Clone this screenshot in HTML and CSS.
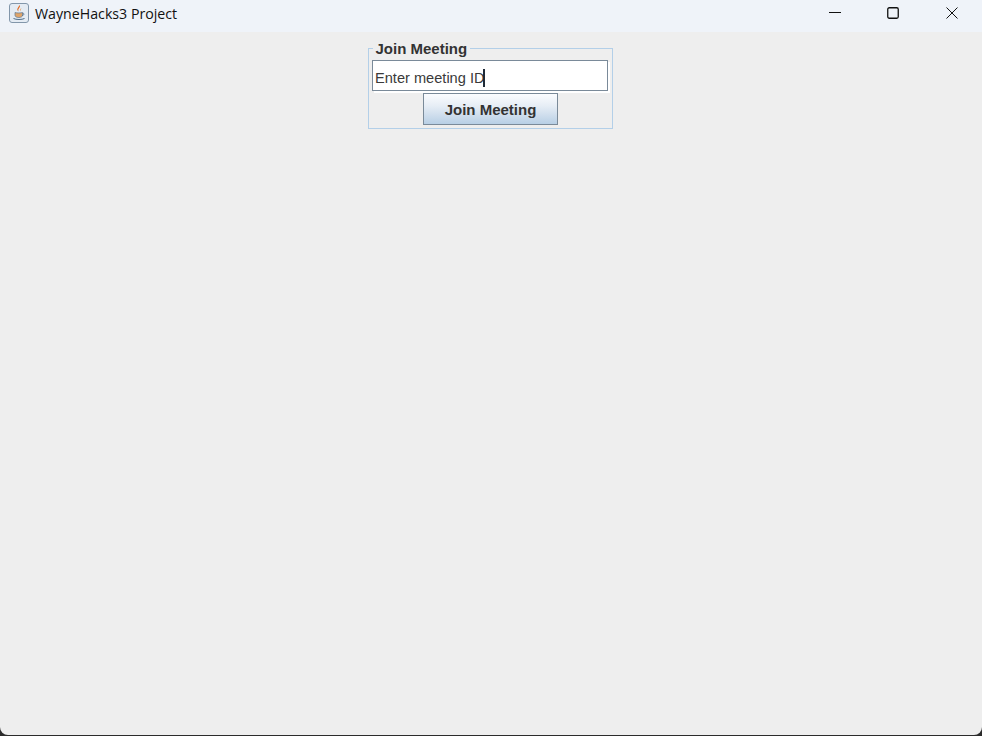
FILE: index.html
```html
<!DOCTYPE html>
<html>
<head>
    <title>WayneHacks3 Project</title>
    <link rel="stylesheet" href="styles.css">
</head>
<body>
    <div class="window">
        <div class="titlebar">
            <div class="app-icon">
                <svg width="20" height="20" viewBox="0 0 20 20">
                    <rect x="0.5" y="0.5" width="19" height="19" rx="2.5" fill="#e4ebf3" stroke="#8296aa"/>
                    <path d="M10.500 2c1.800 2.500-2.500 3.500-.8 6.500-3-2-.3-3.800.8-6.500z" fill="#e0641a"/>
                    <path d="M12.800 5c-1.800 1-2.200 2-1.300 3.500-.3-1.300.2-2.300 1.300-3.500z" fill="#e8862c"/>
                    <path d="M6 9.500c1.500.6 6 .6 7.500 0v2.800c0 1.300-1.300 2.200-3.700 2.200S6 13.600 6 12.300z" fill="#e0a468" stroke="#5c7690" stroke-width=".7"/>
                    <path d="M13.500 10.300c2-.4 2.200 1.800-.6 2.400" fill="none" stroke="#5c7690" stroke-width=".9"/>
                    <path d="M4.500 15.500c2.500 1.300 8.500 1.300 11 0" fill="none" stroke="#4c6a86"/>
                </svg>
            </div>
            <div class="app-title">WayneHacks3 Project</div>
            <div class="controls">
                <div class="control">
                    <svg width="12" height="12" viewBox="0 0 12 12"><path d="M0 5.500h12" stroke="#111" fill="none"/></svg>
                </div>
                <div class="control">
                    <svg width="12" height="12" viewBox="0 0 12 12"><rect x="0.750" y="0.750" width="10.500" height="10.500" rx="1.500" stroke="#111" stroke-width="1.300" fill="none"/></svg>
                </div>
                <div class="control">
                    <svg width="12" height="12" viewBox="0 0 12 12"><path d="M0.500 0.500l11 11M11.500 0.500l-11 11" stroke="#111" fill="none"/></svg>
                </div>
            </div>
        </div>
        <div class="content">
            <fieldset class="join-panel">
                <legend class="join-legend">Join Meeting</legend>
                <div class="meeting-input"><span>Enter meeting ID</span><span class="caret"></span></div>
                <div class="join-button">Join Meeting</div>
            </fieldset>
        </div>
    </div>
</body>
</html>
```

FILE: styles.css
```css
html, body {
    margin: 0;
    height: 100%;
    background: #2b2b2b;
    overflow: hidden;
}

.window {
    display: flex;
    flex-direction: column;
    height: 735px;
    background: #eeeeee;
    border-radius: 0 0 8px 8px;
    overflow: hidden;
    font-family: "Liberation Sans", Arial, sans-serif;
}

.titlebar {
    display: flex;
    flex: none;
    align-items: center;
    height: 32px;
    padding-left: 9px;
    padding-bottom: 6px;
    box-sizing: border-box;
    background: #eff3f9;
}

.app-icon {
    display: flex;
    width: 20px;
    height: 20px;
}

.app-title {
    margin-left: 6px;
    font-family: "Open Sans", "Noto Sans", sans-serif;
    font-size: 14.200px;
    color: #111111;
}

.controls {
    display: flex;
    margin-left: auto;
    padding-right: 1px;
}

.control {
    display: flex;
    align-items: center;
    justify-content: center;
    width: 58.500px;
}

.content {
    display: flex;
    justify-content: center;
    align-items: flex-start;
    flex: 1;
    padding-top: 9px;
    padding-right: 2px;
}

.join-panel {
    display: flex;
    flex-direction: column;
    align-items: center;
    width: 245px;
    height: 88px;
    margin: 0;
    padding: 3px 4px 3px 3px;
    box-sizing: border-box;
    border: 1px solid #b3cfe8;
}

.join-legend {
    margin-left: 1px;
    padding: 0 3px;
    font-size: 15px;
    font-weight: bold;
    line-height: 15px;
    color: #333333;
}

.meeting-input {
    display: flex;
    align-items: center;
    flex: none;
    width: 236px;
    height: 31px;
    margin-top: 1px;
    padding: 5px 0 0 2.500px;
    box-sizing: border-box;
    background: #ffffff;
    border: 1px solid #7a8a99;
    box-shadow: 2px 2px 0 #ffffff;
    font-size: 14.600px;
    color: #3a3a3a;
}

.caret {
    width: 2px;
    height: 18px;
    margin-left: -1.500px;
    background: #1f2a36;
}

.join-button {
    display: flex;
    align-items: center;
    justify-content: center;
    flex: none;
    width: 135px;
    height: 32px;
    margin-top: 2px;
    margin-left: 2px;
    box-sizing: border-box;
    border: 1px solid #7a8a99;
    background: linear-gradient(#fbfcfe, #e6edf5 40%, #b8cfe5);
    font-size: 15px;
    font-weight: bold;
    color: #333333;
}
```
